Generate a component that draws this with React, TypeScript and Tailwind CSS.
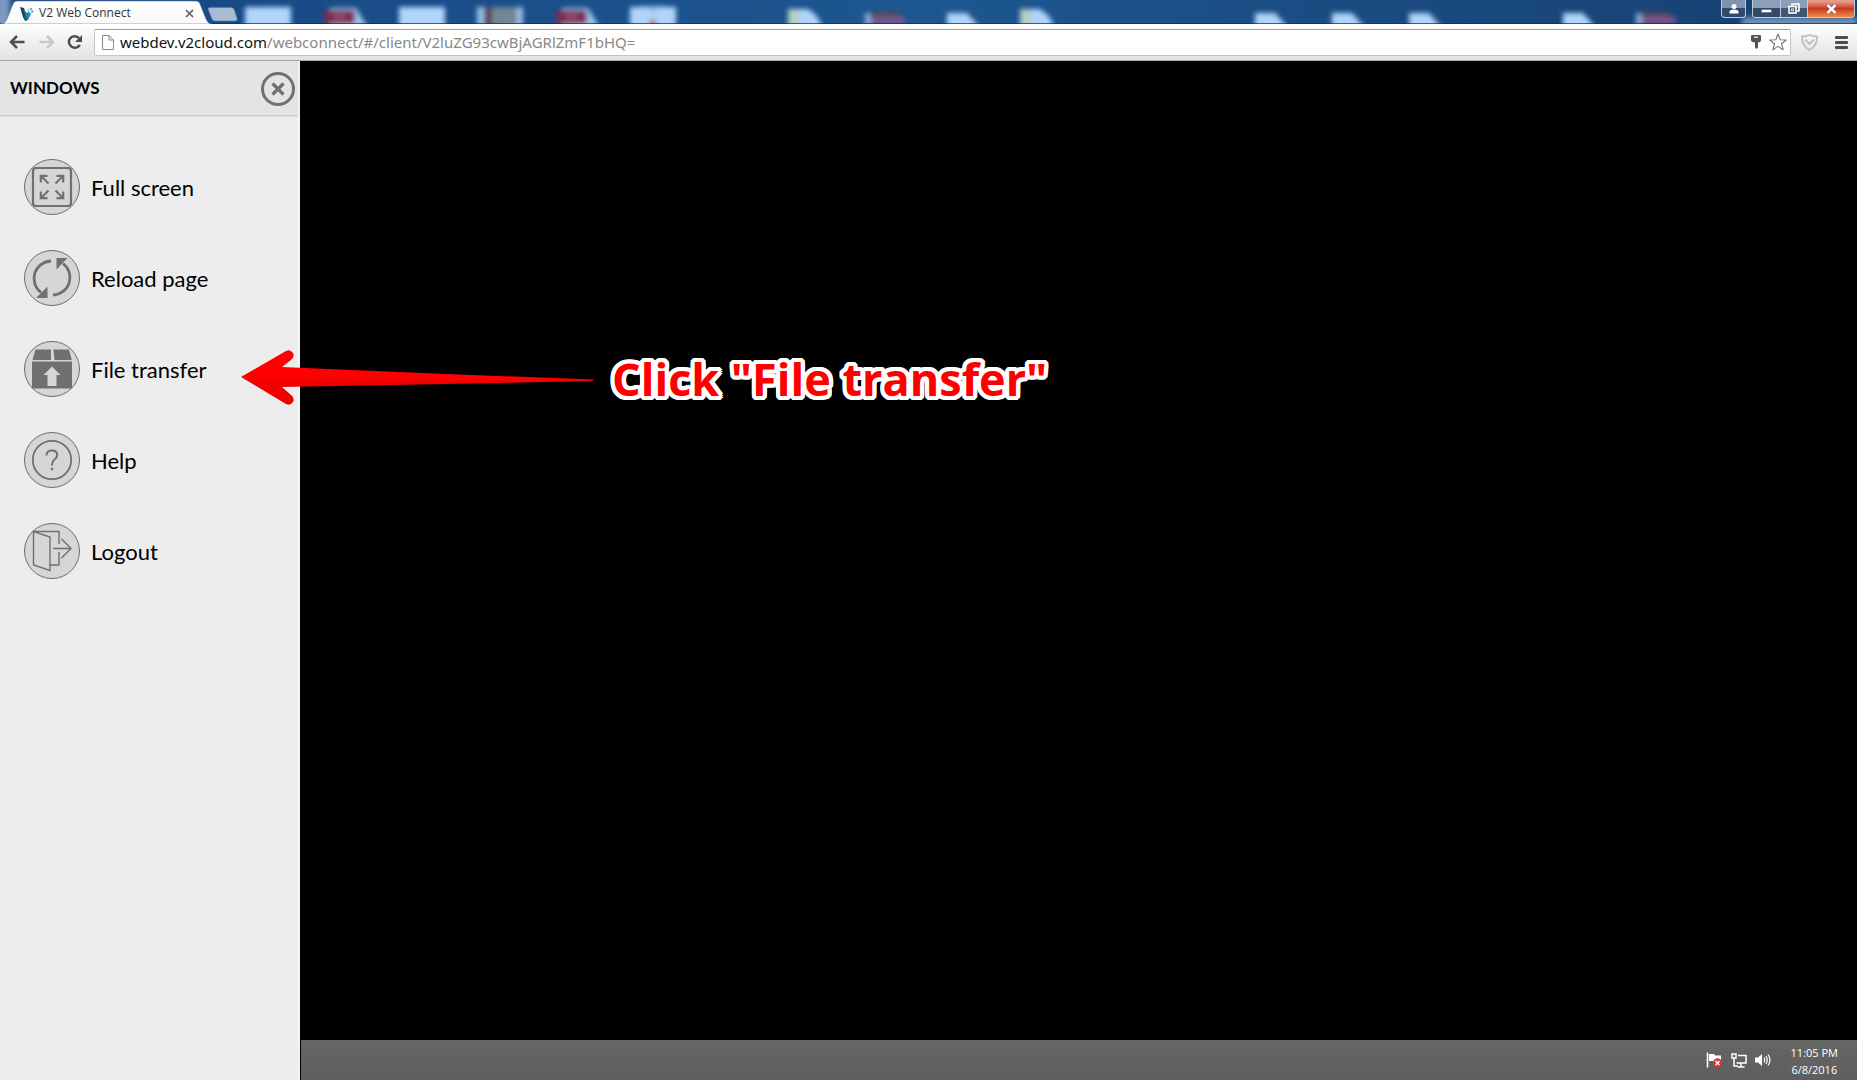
import type { ReactNode } from "react";

type Shape = "square" | "page" | "note" | "red" | "purple" | "film" | "letter";

const desktopIcons: { x: number; shape: Shape }[] = [
  { x: 245, shape: "square" },
  { x: 324, shape: "red" },
  { x: 399, shape: "square" },
  { x: 477, shape: "film" },
  { x: 556, shape: "red" },
  { x: 630, shape: "letter" },
  { x: 788, shape: "note" },
  { x: 867, shape: "purple" },
  { x: 947, shape: "page" },
  { x: 1020, shape: "note" },
  { x: 1255, shape: "page" },
  { x: 1332, shape: "page" },
  { x: 1409, shape: "page" },
  { x: 1563, shape: "page" },
  { x: 1638, shape: "purple" },
];

function DesktopShape({ x, shape }: { x: number; shape: Shape }) {
  switch (shape) {
    case "square":
      return <rect x={x} y={7} width={46} height={24} fill="#b0d4fb" />;
    case "letter":
      return (
        <g>
          <rect x={x} y={7} width={46} height={24} fill="#b0d4fb" />
          <path d={`M${x + 17} 27 l6 -10 l6 10z`} fill="#b0706c" />
          <path d={`M${x + 10} 6 l13 5 l13 -5z`} fill="#8fb0d8" />
        </g>
      );
    case "film":
      return (
        <g>
          <rect x={x} y={7} width={46} height={24} fill="#9cc0e6" />
          <rect x={x + 7} y={7} width={8} height={24} fill="#54485a" />
          <rect x={x + 15} y={7} width={25} height={24} fill="#758597" />
        </g>
      );
    case "red":
      return (
        <g>
          <path d={`M${x + 6} 28 V8 H${x + 32} L${x + 44} 28z`} fill="#9fc3ec" />
          <rect x={x} y={10} width={31} height={14} rx={4} fill="#7c2a50" />
          <rect x={x + 10} y={15} width={12} height={3} fill="#a06080" />
        </g>
      );
    case "purple":
      return (
        <g>
          <rect x={x - 2} y={13} width={6} height={14} fill="#86aed6" />
          <rect x={x + 3} y={12} width={29} height={6} rx={2} fill="#58495e" />
          <rect x={x + 4} y={17} width={34} height={7} fill="#7a5690" />
        </g>
      );
    case "note":
      return (
        <g>
          <path d={`M${x} 28 V9 H${x + 19} Q${x + 31} 14 ${x + 34} 28z`} fill="#b0d4fb" />
          <path d={`M${x} 28 V9 H${x + 11} V28z`} fill="#b3cfc4" />
        </g>
      );
    default:
      return <path d={`M${x} 30 V13 H${x + 20} L${x + 35} 30z`} fill="#b0d4fb" />;
  }
}

function TabStrip() {
  return (
    <header className="relative flex h-6 shrink-0 justify-between overflow-hidden bg-linear-to-r from-[#174683] via-[#1d5690] to-[#163f70]">
      <svg className="absolute inset-0 h-6 w-full" aria-hidden="true">
        <defs>
          <filter id="glass" x="-20%" y="-50%" width="140%" height="200%">
            <feGaussianBlur stdDeviation="2.500" />
          </filter>
        </defs>
        <g filter="url(#glass)">
          {desktopIcons.map((icon) => (
            <DesktopShape key={icon.x} x={icon.x} shape={icon.shape} />
          ))}
          <rect x="1742" y="17" width="115" height="12" fill="#6d8fb4" />
          <rect x="-8" y="-4" width="18" height="34" fill="#7c99bf" />
        </g>
        <rect width="100%" height="1" y="23" fill="#102b50" opacity="0.7" />
      </svg>

      <div className="relative flex">
        <div className="relative flex h-6 w-52 items-center pr-2.5 pl-5">
          <svg className="absolute inset-0" width="212" height="24" viewBox="0 0 212 24" aria-hidden="true">
            <defs>
              <linearGradient id="tab" x1="0" y1="0" x2="0" y2="1">
                <stop offset="0" stopColor="#ffffff" />
                <stop offset="1" stopColor="#f9f9f9" />
              </linearGradient>
            </defs>
            <path
              d="M0 24 C4 24 5 23 7 19 L13 4 Q14 1 17 1 H196 Q199 1 200 4 L206 19 Q208 24 212 24z"
              fill="url(#tab)"
              stroke="#5d7290"
              strokeWidth="0.6"
            />
          </svg>
          <svg className="relative mt-1" width="14" height="16" viewBox="0 0 14 16" aria-hidden="true">
            <path d="M0 1 L4 2 L8 13 L6 15 Q4 14 3 11z" fill="#173f57" />
            <path d="M3 3 L7 7 L9 5 L10 8 L12 6 L8 14 L5 15 L6 10z" fill="#2389b4" />
            <path d="M4 8 L7 12 L6 15 L4 13z" fill="#145b80" />
            <circle cx="11" cy="3" r="1.3" fill="#63b7d6" />
            <circle cx="12.300" cy="5.500" r="1" fill="#2f8fb8" />
            <circle cx="8.500" cy="4" r="1" fill="#8bc9df" />
          </svg>
          <span className="relative ml-[5px] flex-1 pt-0.5 font-['Open_Sans',sans-serif] text-[12px] leading-4 text-[#333]">
            V2 Web Connect
          </span>
          <button type="button" aria-label="Close tab" className="relative mt-0.5 mr-1">
            <svg width="9" height="9" viewBox="0 0 9 9" fill="none" stroke="#5c5c5c" strokeWidth="1.600">
              <path d="M1 1 L8 8 M8 1 L1 8" />
            </svg>
          </button>
        </div>
        <button type="button" aria-label="New tab" className="mt-1.5 h-4">
          <svg width="30" height="15" viewBox="0 0 30 15">
            <path d="M2 .5 H23 Q25 .5 26 2 L29 11 Q30 14 27 14 H7 Q5 14 4 12 L0 2 Q0 .5 2 .5z" fill="#a9bad3" stroke="#5b7aa5" strokeWidth="0.7" />
          </svg>
        </button>
      </div>

      <div className="relative flex items-start gap-1.5 pr-0.5">
        <button
          type="button"
          aria-label="Profile"
          className="flex h-[18px] w-[25px] items-center justify-center rounded-b border border-t-0 border-[#c3cedb] bg-linear-to-b from-[#7f93ad] from-45% to-[#2c4a6c] to-50%"
        >
          <svg width="10" height="10" viewBox="0 0 10 10" fill="#fff">
            <circle cx="5" cy="2.500" r="2.500" />
            <path d="M.5 9.500 V7.500 Q1 5.500 5 5.500 Q9 5.500 9.500 7.500 V9.500z" />
          </svg>
        </button>
        <div className="flex h-[18px] overflow-hidden rounded-b border border-t-0 border-[#c3cedb]">
          <button
            type="button"
            aria-label="Minimize"
            className="flex w-7 items-end justify-center border-r border-[#c3cedb] bg-linear-to-b from-[#8d9fb6] from-45% to-[#2f4a6b] to-50% pb-1"
          >
            <svg width="11" height="4" viewBox="0 0 11 4">
              <rect x=".5" y=".5" width="10" height="3" fill="#fff" stroke="#4c5b70" strokeWidth="0.500" />
            </svg>
          </button>
          <button
            type="button"
            aria-label="Restore"
            className="flex w-[27px] items-center justify-center border-r border-[#c3cedb] bg-linear-to-b from-[#8d9fb6] from-45% to-[#3d5775] to-50%"
          >
            <svg width="12" height="11" viewBox="0 0 12 11" fill="none" stroke="#fff" strokeWidth="1.600">
              <path d="M4 2.500 V1 H11 V8 H9" />
              <rect x="1" y="3.500" width="7" height="6.500" fill="#44546b" />
              <rect x="3.600" y="5.900" width="2" height="2" strokeWidth="0.800" />
            </svg>
          </button>
          <button
            type="button"
            aria-label="Close window"
            className="flex w-[46px] items-center justify-center bg-linear-to-b from-[#e59a86] from-10% via-[#c8391b] via-50% to-[#f08a48]"
          >
            <svg width="11" height="10" viewBox="0 0 11 10" fill="none">
              <path d="M1.500 1 L9.500 9 M9.500 1 L1.500 9" stroke="#5c4660" strokeWidth="3.600" />
              <path d="M1.500 1 L9.500 9 M9.500 1 L1.500 9" stroke="#fff" strokeWidth="2.500" />
            </svg>
          </button>
        </div>
      </div>
    </header>
  );
}

function Toolbar() {
  return (
    <nav
      aria-label="Browser"
      className="flex h-[37px] shrink-0 items-center border-b border-[#a6a6a6] bg-linear-to-b from-white to-[#e2e2e2] px-[9px]"
    >
      <button type="button" aria-label="Back" className="mr-3.5">
        <svg width="16" height="14" viewBox="0 0 16 14" fill="none" stroke="#4e4e4e" strokeWidth="2.500">
          <path d="M15.500 7 H2.500 M8 1 L2 7 L8 13" />
        </svg>
      </button>
      <button type="button" aria-label="Forward" className="mr-3">
        <svg width="16" height="14" viewBox="0 0 16 14" fill="none" stroke="#c8c8c8" strokeWidth="2.500">
          <path d="M.5 7 H13.500 M8 1 L14 7 L8 13" />
        </svg>
      </button>
      <button type="button" aria-label="Reload" className="mr-3">
        <svg width="15" height="16" viewBox="0 0 15 16">
          <path d="M12.200 4.200 A5.800 5.800 0 1 0 12.800 10.800" fill="none" stroke="#4e4e4e" strokeWidth="2.500" />
          <path d="M15 1 V8 H8z" fill="#4e4e4e" />
        </svg>
      </button>

      <div className="flex h-[27px] min-w-0 flex-1 items-center rounded-xs border border-[#c4c4c4] border-t-[#9d9d9d] bg-white pr-[3px] pl-[7px]">
        <svg width="12" height="15" viewBox="0 0 12 15" fill="#fdfdfd" stroke="#8a8a8a" aria-hidden="true">
          <path d="M.5 .5 H7 L11.500 5 V14.500 H.5z" />
          <path d="M7 .5 V5 H11.500" fill="none" />
        </svg>
        <a
          href="#/client/V2luZG93cwBjAGRlZmF1bHQ="
          className="ml-1.5 flex-1 font-['Noto_Sans',sans-serif] text-[15px] leading-5 whitespace-nowrap text-[#888]"
        >
          <span className="text-[#111]">webdev.v2cloud.com</span>
          /webconnect/#/client/V2luZG93cwBjAGRlZmF1bHQ=
        </a>
        <button type="button" aria-label="Saved password">
          <svg width="10" height="14" viewBox="0 0 10 14" fill="#555">
            <path d="M1 0 H9 Q10 0 10 1 V5 Q10 7 7 7.500 V12.500 L5.500 14 L4 12.500 V7.500 Q0 7 0 5 V1 Q0 0 1 0z" />
            <rect x="3" y="1.600" width="4" height="1.200" fill="#fff" />
          </svg>
        </button>
        <button type="button" aria-label="Bookmark" className="ml-2">
          <svg width="18" height="18" viewBox="0 0 18 18" fill="#fff" stroke="#757575" strokeWidth="1.100" strokeLinejoin="round">
            <path d="M9 1 L11.200 6.700 L17.300 7 L12.500 10.800 L14.200 16.800 L9 13.400 L3.800 16.800 L5.500 10.800 L.7 7 L6.800 6.700z" />
          </svg>
        </button>
      </div>

      <button type="button" aria-label="Extension" className="ml-2.5">
        <svg width="17" height="17" viewBox="0 0 17 17" fill="none" stroke="#bdbdbd" strokeWidth="1.800" strokeLinejoin="round">
          <path d="M8.500 1 Q12 2.500 16 2.500 Q16.500 12 8.500 16 Q.5 12 1 2.500 Q5 2.500 8.500 1z" />
          <path d="M4 5.500 L8.500 10 L13 5.500" />
        </svg>
      </button>
      <button type="button" aria-label="Menu" className="ml-[17px]">
        <svg width="13" height="13" viewBox="0 0 13 13" fill="#4d4d4d">
          <rect width="13" height="3" rx="1" />
          <rect y="5" width="13" height="3" rx="1" />
          <rect y="10" width="13" height="3" rx="1" />
        </svg>
      </button>
    </nav>
  );
}

const GREY = "#707070";

const menu: { label: string; icon: ReactNode }[] = [
  {
    label: "Full screen",
    icon: (
      <g fill="none" stroke={GREY} strokeWidth="2.200">
        <rect x="9" y="9" width="38" height="38" rx="3" />
        <path d="M24.500 24.500 L17 17 M31.500 24.500 L39 17 M24.500 31.500 L17 39 M31.500 31.500 L39 39" />
        <path d="M16.800 23.500 V16.800 H23.500 M32.500 16.800 H39.200 V23.500 M16.800 32.500 V39.200 H23.500 M32.500 39.200 H39.200 V32.500" />
      </g>
    ),
  },
  {
    label: "Reload page",
    icon: (
      <g>
        <path d="M27 11 A17.500 17.500 0 0 0 17 42.500" fill="none" stroke={GREY} strokeWidth="2.800" />
        <path d="M29 45 A17.500 17.500 0 0 0 39 13.500" fill="none" stroke={GREY} strokeWidth="2.800" />
        <path d="M32.500 8 H43.500 L32.500 19.500z M23.500 36.500 V48 H12z" fill={GREY} />
      </g>
    ),
  },
  {
    label: "File transfer",
    icon: (
      <g fill={GREY}>
        <path d="M11.500 8.500 H27 V19 H8.500z M29.500 8.500 H45 L47.800 19 H30.500z" />
        <path d="M8 20.500 H48 V47.500 H8z" />
        <path d="M28 25.500 L36.500 34 H32.500 V45 H23.500 V34 H19.500z" fill="#d6d6d6" />
      </g>
    ),
  },
  {
    label: "Help",
    icon: (
      <g fill="none" stroke={GREY}>
        <circle cx="28" cy="28" r="19.200" strokeWidth="1.800" />
        <path d="M22.500 23.500 Q22.500 18.500 27.800 18.500 Q33.200 18.500 33.200 23 Q33.200 25.500 30.500 27.500 Q28 29.500 28 32.500 V33.500" strokeWidth="2" />
        <rect x="26.800" y="35.800" width="2.400" height="2.400" fill={GREY} stroke="none" />
      </g>
    ),
  },
  {
    label: "Logout",
    icon: (
      <g fill="none" stroke={GREY} strokeWidth="1.400">
        <path d="M9.500 8.500 H35 V21 M35 29 V42 H26" />
        <path d="M9.500 8.500 L26 14 V47.500 L9.500 42z" />
        <path d="M29 25.500 H46.500 M37.500 16 L47 25.500 L37.500 35" />
      </g>
    ),
  },
];

function Sidebar() {
  return (
    <aside className="flex w-[300px] shrink-0 flex-col border-r-2 border-[#f3f3f3] bg-[#ededed] font-[Lato,sans-serif] text-black">
      <div className="flex h-[55px] items-center justify-between border-b border-[#c6c6c6] bg-[#e4e4e4] pr-[3px] pl-2.5 shadow-xs">
        <h1 className="text-[17px] leading-6 font-bold">WINDOWS</h1>
        <button type="button" aria-label="Close menu" className="pt-0.5">
          <svg width="34" height="34" viewBox="0 0 34 34" fill="none" stroke={GREY} strokeWidth="3">
            <circle cx="17" cy="17" r="15.500" />
            <path d="M11.500 11.500 L22.500 22.500 M22.500 11.500 L11.500 22.500" strokeWidth="3.200" />
          </svg>
        </button>
      </div>
      <ul className="flex flex-col gap-[35px] px-6 pt-[43px]">
        {menu.map((item) => (
          <li key={item.label}>
            <button type="button" className="flex items-center gap-[11px]">
              <svg width="56" height="56" viewBox="0 0 56 56" aria-hidden="true">
                <circle cx="28" cy="28" r="27.500" fill="#d6d6d6" stroke="#6c6c6c" strokeWidth="1" />
                {item.icon}
              </svg>
              <span className="pt-0.5 text-[22px] leading-7">{item.label}</span>
            </button>
          </li>
        ))}
      </ul>
    </aside>
  );
}

function Taskbar() {
  return (
    <footer className="flex h-10 items-center justify-end border-l border-black bg-linear-to-b from-[#646762] to-[#5f5d61] pr-[19px] font-['Open_Sans',sans-serif] text-white">
      <button type="button" aria-label="Action center">
        <svg width="17" height="16" viewBox="0 0 17 16">
          <path d="M1.500 .5 V15.500" stroke="#fff" strokeWidth="1.600" />
          <path d="M3 2 H8 L9 3.500 H15 V9 H3z" fill="#fff" />
          <circle cx="11.500" cy="11" r="4.700" fill="#d43a30" />
          <path d="M9.500 9 L13.500 13 M13.500 9 L9.500 13" stroke="#fff" strokeWidth="1.400" />
        </svg>
      </button>
      <button type="button" aria-label="Network" className="ml-2">
        <svg width="16" height="15" viewBox="0 0 16 15" fill="none" stroke="#fff" strokeWidth="1.500">
          <path d="M7 2.500 H15 V10 H5.500 M10 10 V14 M6.500 14 H13.500" />
          <rect x="1" y="1" width="4" height="4" />
          <path d="M3 5 V13 H7" />
        </svg>
      </button>
      <button type="button" aria-label="Volume" className="ml-2">
        <svg width="16" height="14" viewBox="0 0 16 14" fill="none" stroke="#fff" strokeWidth="1.200">
          <path d="M0 4.500 H3 L7 1 V13 L3 9.500 H0z" fill="#fff" stroke="none" />
          <path d="M9 4.500 Q10.500 7 9 9.500 M11 3 Q13.500 7 11 11 M13 1.500 Q17 7 13 12.500" />
        </svg>
      </button>
      <div className="ml-5 pt-0.5 text-center text-[11px] leading-[17px]">
        <time className="block">11:05 PM</time>
        <time className="block">6/8/2016</time>
      </div>
    </footer>
  );
}

function Annotation() {
  return (
    <div className="pointer-events-none absolute top-[285px] left-[241px] flex items-start">
      <svg width="353" height="64" viewBox="0 0 353 64" aria-hidden="true">
        <defs>
          <linearGradient id="arrow" x1="0" y1="0" x2="0" y2="1">
            <stop offset="0.500" stopColor="#ff0000" />
            <stop offset="0.600" stopColor="#f00000" />
          </linearGradient>
        </defs>
        <path
          d="M0 31 L45 5 Q49 3 52 7 Q54 11 50 14 L41 21 L205 28 L352 33.500 L352 35 L205 38 L41 41 L50 49 Q54 52 52 56 Q49 60 45 58z"
          fill="url(#arrow)"
        />
      </svg>
      <p className="ml-[18px] pt-px font-['Open_Sans',sans-serif] text-[45px] leading-[64px] font-bold whitespace-nowrap text-[#fe0000] [text-shadow:4px_0_0_#fff,4px_2px_0_#fff,3px_3px_0_#fff,2px_4px_0_#fff,0_4px_0_#fff,-2px_4px_0_#fff,-3px_3px_0_#fff,-4px_2px_0_#fff,-4px_0_0_#fff,-4px_-2px_0_#fff,-3px_-3px_0_#fff,-2px_-4px_0_#fff,0_-4px_0_#fff,2px_-4px_0_#fff,3px_-3px_0_#fff,4px_-2px_0_#fff,2px_0_0_#fff,-2px_0_0_#fff,0_2px_0_#fff,0_-2px_0_#fff]">
        Click "File transfer"
      </p>
    </div>
  );
}

export default function App() {
  return (
    <div className="flex h-screen flex-col overflow-hidden bg-black">
      <TabStrip />
      <Toolbar />
      <div className="relative flex min-h-0 flex-1">
        <Sidebar />
        <main className="flex min-w-0 flex-1 flex-col bg-black">
          <div className="flex-1" />
          <Taskbar />
        </main>
        <Annotation />
      </div>
    </div>
  );
}
